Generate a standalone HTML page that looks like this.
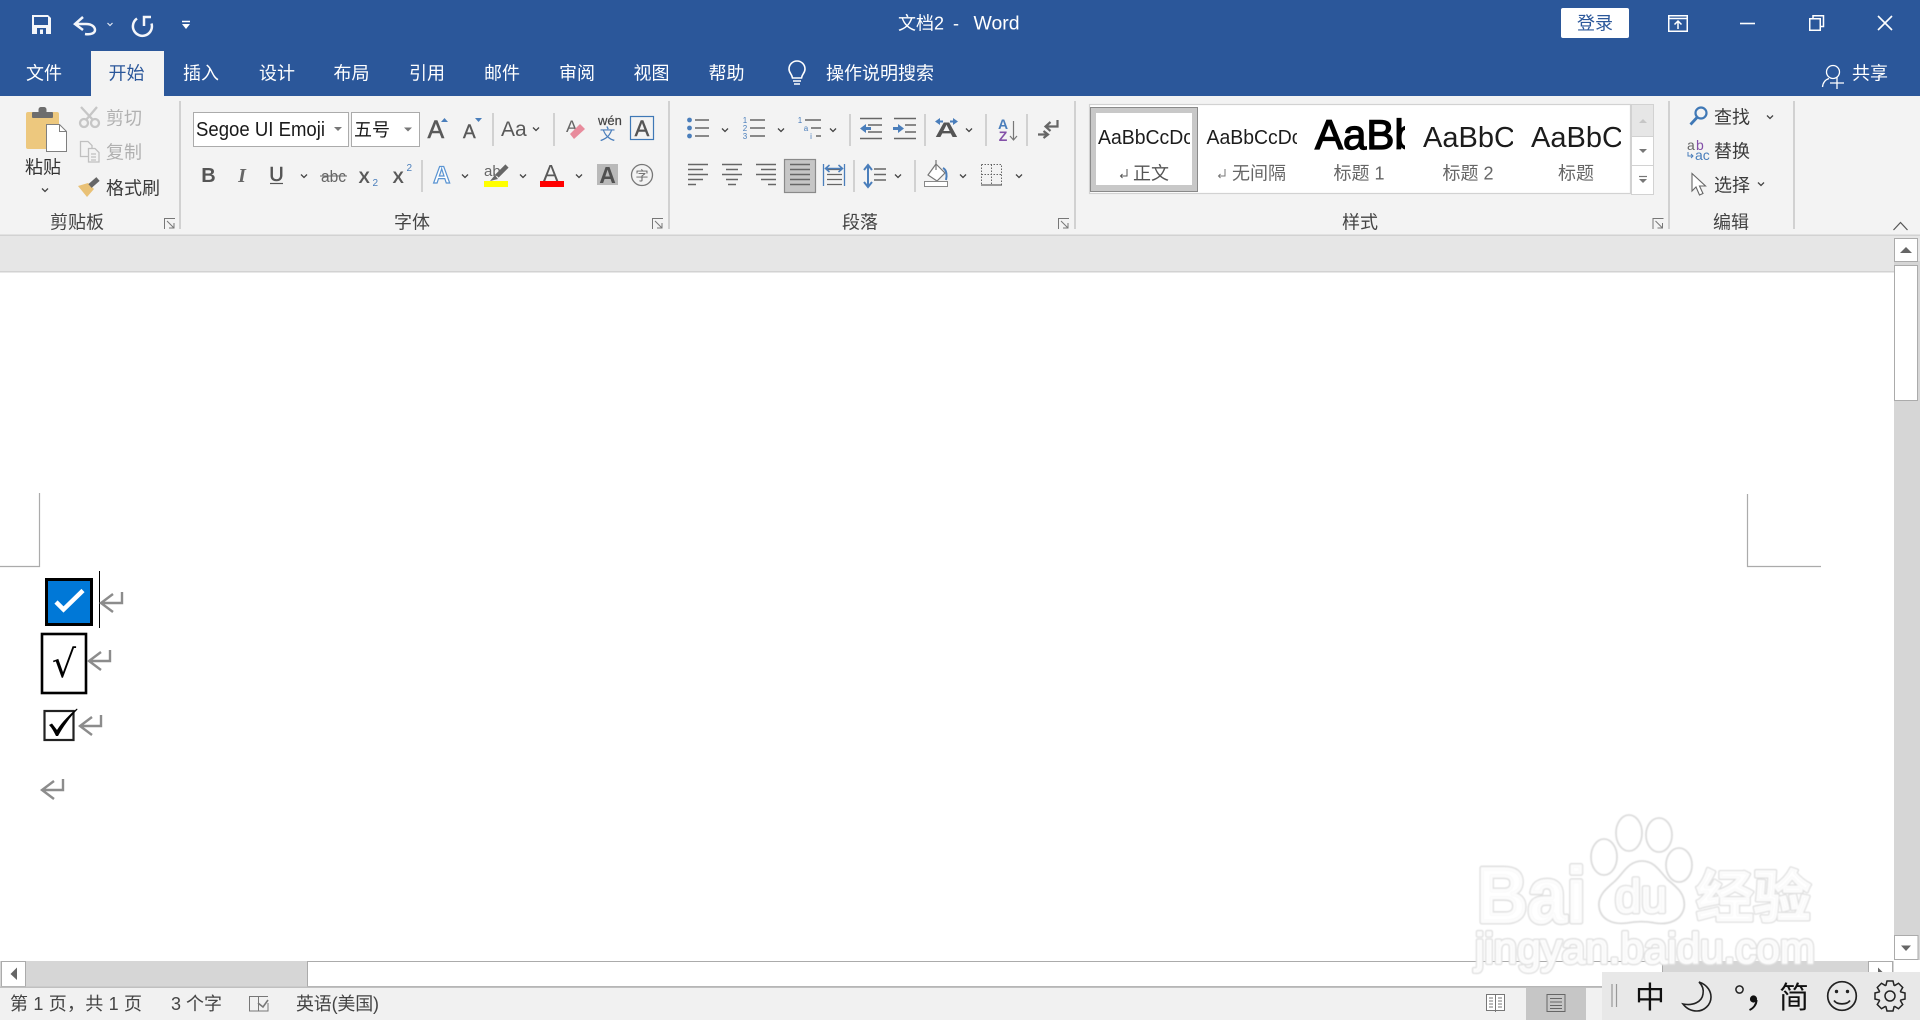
<!DOCTYPE html>
<html lang="zh"><head><meta charset="utf-8"><title>文档2 - Word</title>
<style>
html,body{margin:0;padding:0;width:1920px;height:1020px;overflow:hidden;background:#fff}
svg{display:block;font-family:"Liberation Sans","Noto Sans CJK SC",sans-serif}
.t{fill:#fff;font-size:18px;text-anchor:middle}
.g{fill:#444;font-size:18px;text-anchor:middle}
.l{fill:#666;font-size:18px;text-anchor:middle}
.d{fill:#b1b1b1;font-size:18px}
.k{fill:#3b3b3b;font-size:18px}
.a{fill:#595959;font-weight:700}
.sep{stroke:#c6c6c6;stroke-width:1.5}
.ln{stroke:#666;stroke-width:1.5;fill:none}
.bl{fill:#4a7ebb}
.pil{fill:none;stroke:#8c8c8c;stroke-width:2.4}
.wo{fill:none;stroke:#dedede;stroke-linejoin:round}
.wi{fill:#fff;fill-opacity:.8;stroke:#fff;stroke-opacity:.8;stroke-linejoin:round}
</style></head><body>
<svg xmlns="http://www.w3.org/2000/svg" width="1920" height="1020" viewBox="0 0 1920 1020">
<defs>
<path id="c" d="M-3 -1.5L0 1.5L3 -1.5" fill="none" stroke="#444" stroke-width="1.3"/>
<g id="lau" fill="none" stroke="#777" stroke-width="1"><path d="M.5 11V.5H11"/><path d="M3 3L10 10M10 5V10H5"/></g>
<g id="pi"><path class="pil" d="M122 592V603H101M113 594L101 603L113 612"/></g>
<clipPath id="s1"><rect x="1096" y="113" width="94" height="72"/></clipPath>
<clipPath id="s2"><rect x="1204" y="113" width="93" height="72"/></clipPath>
<clipPath id="s3"><rect x="1312" y="113" width="93" height="72"/></clipPath>
<clipPath id="s4"><rect x="1420" y="113" width="93" height="72"/></clipPath>
<clipPath id="s5"><rect x="1528" y="113" width="93" height="72"/></clipPath>
<filter id="soft"><feGaussianBlur stdDeviation=".6"/></filter>
</defs>

<!-- title bar -->
<rect width="1920" height="96" fill="#2b579a"/>
<path d="M32 15H48L51 18V34H32Z" fill="#f4f6fa"/>
<rect x="34" y="17" width="14" height="8" fill="#2b579a"/><rect x="37" y="28" width="9" height="6" fill="#2b579a"/><rect x="40" y="29.5" width="3" height="4.5" fill="#f4f6fa"/>
<path d="M83 17L75 24L83 30M76 24H86C92 24 95 27 95 30C95 33 91 35 85 34" fill="none" stroke="#f4f6fa" stroke-width="2.5"/>
<path d="M107.5 23L110 25.5L112.5 23" fill="none" stroke="#dfe6f2" stroke-width="1.2"/>
<path d="M151.5 23.5A9.5 9.5 0 1 1 137 18.5M151 17H144V26" fill="none" stroke="#f4f6fa" stroke-width="2.5"/>
<path d="M182 21.5H190" stroke="#fff" stroke-width="1.5"/><path d="M182 24H190L186 29Z" fill="#fff"/>
<text x="898" y="29.5" fill="#fff" font-size="18">文档2</text>
<text x="956" y="29.5" fill="#fff" font-size="18" text-anchor="middle">-</text>
<text x="973.5" y="29.5" fill="#fff" font-size="19" textLength="46" lengthAdjust="spacingAndGlyphs">Word</text>
<rect x="1561" y="8" width="68" height="30" rx="2" fill="#fff"/>
<text x="1595" y="29.5" fill="#2b579a" font-size="18" text-anchor="middle">登录</text>
<rect x="1668.75" y="15.75" width="18.5" height="15.5" fill="none" stroke="#fff" stroke-width="1.5"/><path d="M1668 18.5H1688" stroke="#fff" stroke-width="1.5"/>
<path d="M1678 29V21.5M1674.5 24.5L1678 21L1681.5 24.5" fill="none" stroke="#fff" stroke-width="1.5"/>
<path d="M1740 23.5H1755" stroke="#fff" stroke-width="1.6"/>
<rect x="1809.75" y="18.75" width="10.5" height="11.5" fill="none" stroke="#fff" stroke-width="1.5"/><path d="M1813 18.5V15.75H1823.5V26.5H1820.5" fill="none" stroke="#fff" stroke-width="1.5"/>
<path d="M1878 16L1892 30M1892 16L1878 30" stroke="#fff" stroke-width="1.6"/>

<!-- tabs -->
<rect x="91" y="51" width="73" height="45" fill="#f3f3f3"/>
<text class="t" x="44" y="79.5">文件</text>
<text class="t" x="126.5" y="79.5" style="fill:#2b579a">开始</text>
<text class="t" x="201" y="79.5">插入</text>
<text class="t" x="277" y="79.5">设计</text>
<text class="t" x="351.5" y="79.5">布局</text>
<text class="t" x="427" y="79.5">引用</text>
<text class="t" x="502" y="79.5">邮件</text>
<text class="t" x="577" y="79.5">审阅</text>
<text class="t" x="651.5" y="79.5">视图</text>
<text class="t" x="726.5" y="79.5">帮助</text>
<text class="t" x="880" y="79.5">操作说明搜索</text>
<text class="t" x="1870" y="79.5">共享</text>
<path d="M792.5 78C792 74 789 73 789 69A8 8 0 0 1 805 69C805 73 802 74 801.5 78ZM793 81H801M794 84H800" fill="none" stroke="#fff" stroke-width="1.6"/>
<circle cx="1833" cy="72" r="6.5" fill="none" stroke="#fff" stroke-width="1.3"/>
<path d="M1822.5 87C1823 82 1826 79.5 1829 78.5M1830 83H1844M1837 77V89" fill="none" stroke="#fff" stroke-width="1.3"/>

<!-- ribbon bg -->
<rect y="96" width="1920" height="139" fill="#f3f3f3"/>
<rect y="234.5" width="1920" height="1.5" fill="#d2d2d2"/>
<path class="sep" d="M180 101V229M669 101V229M1075 101V229M1669 101V229M1794 101V229"/>

<!-- clipboard -->
<rect x="26" y="112" width="33" height="37" rx="2" fill="#edc87e"/>
<rect x="32" y="112" width="21" height="6" rx="1" fill="#6d6d6d"/><rect x="38.5" y="107" width="8" height="7" rx="2.5" fill="#6d6d6d"/>
<path d="M46.5 124.5H59.5L66.5 131.5V151.5H46.5Z" fill="#fff" stroke="#7f7f7f"/><path d="M59.5 124.5V131.5H66.5" fill="none" stroke="#7f7f7f"/>
<text class="g" x="43" y="173.5" style="fill:#333">粘贴</text>
<use href="#c" x="45" y="190"/>
<g fill="none" stroke="#c6c6c6" stroke-width="2.3"><circle cx="84" cy="123" r="4"/><circle cx="95" cy="123" r="4"/><path d="M81 107L93 120M97 107L86 120"/></g>
<text class="d" x="106" y="124.5">剪切</text>
<g fill="#f3f3f3" stroke="#c0c0c0" stroke-width="1.3"><path d="M80.5 141.5H88L92 145.5V156.5H80.5Z"/><path d="M88.5 148.5H95L99 152.5V162H88.5Z"/><path d="M91 154H96M91 157H96M91 160H96" /></g>
<text class="d" x="106" y="158.5">复制</text>
<path d="M78 186L88 183L94 189L87 197Z" fill="#e9c176"/><path d="M90 186L98 179" stroke="#666" stroke-width="5"/>
<text class="k" x="106" y="194.5">格式刷</text>
<text class="g" x="77" y="228.5">剪贴板</text>
<use href="#lau" x="164" y="218"/>

<!-- font -->
<rect x="193.5" y="112.5" width="155" height="34" fill="#fff" stroke="#ababab"/>
<text x="196" y="136" font-size="20" fill="#1a1a1a" textLength="129" lengthAdjust="spacingAndGlyphs">Segoe UI Emoji</text>
<path d="M334 127H342L338 131Z" fill="#777"/>
<rect x="351.5" y="112.5" width="68" height="34" fill="#fff" stroke="#ababab"/>
<text x="354" y="136" font-size="18" fill="#1a1a1a">五号</text>
<path d="M404 127.5H412L408 131.5Z" fill="#777"/>
<text x="427.5" y="138" font-size="25" fill="#595959" stroke="#595959" stroke-width=".5">A</text><path class="bl" d="M441 122L444.5 118L448 122Z"/>
<text x="463" y="138" font-size="19" fill="#595959" stroke="#595959" stroke-width=".4">A</text><path class="bl" d="M475 118H482L478.5 122Z"/>
<path class="sep" d="M493 113V146M554 113V146"/>
<text x="501" y="136" fill="#595959" font-size="21">Aa</text><use href="#c" x="536" y="129"/>
<text x="566" y="132" fill="#666" font-size="17">A</text>
<path d="M580 124L585 129L574 139L570 134Z" fill="#e88b9c"/>
<text x="598" y="125" font-size="13" fill="#444" stroke="#444" stroke-width=".2">wén</text>
<text x="607.5" y="139.5" font-size="15.5" fill="#4a7ebb" text-anchor="middle">文</text>
<rect x="630.5" y="116.5" width="23" height="23" fill="none" stroke="#3f78b6" stroke-width="1.2"/>
<text x="642" y="136" font-size="22" fill="#555" stroke="#555" stroke-width=".4" text-anchor="middle">A</text>

<text x="208.5" y="182" font-size="20" fill="#555" font-weight="700" text-anchor="middle">B</text>
<text x="242" y="182" font-size="20" fill="#666" font-style="italic" font-weight="700" text-anchor="middle" font-family="Liberation Serif">I</text>
<text x="276.5" y="181" font-size="20" fill="#555" text-anchor="middle" stroke="#555" stroke-width=".5">U</text><path d="M270 183.5H283" stroke="#555" stroke-width="1.2"/>
<use href="#c" x="304" y="176"/>
<text x="321" y="182" font-size="17" fill="#666" textLength="25" lengthAdjust="spacingAndGlyphs">abc</text><path d="M320 176H347" stroke="#666" stroke-width="1"/>
<text class="a" x="358.5" y="183" font-size="17">X</text><text x="372.5" y="186" font-size="10" fill="#4a7ebb">2</text>
<text class="a" x="392.5" y="183" font-size="17">X</text><text x="406.5" y="171" font-size="10" fill="#4a7ebb">2</text>
<path class="sep" d="M422 160V192M854 160V192M915 160V192"/>
<text x="433" y="183" font-size="24" fill="#fff" stroke="#5a94d2" stroke-width="1.2" font-weight="700">A</text>
<use href="#c" x="465" y="176"/>
<text x="484" y="176" font-size="15" fill="#666">ab</text>
<path d="M507 166L497 176" stroke="#666" stroke-width="4.5"/><path d="M495 175L490 181L498 179Z" fill="#666"/>
<rect x="484" y="181" width="24" height="6" fill="#ff0"/>
<use href="#c" x="523" y="176"/>
<text x="543" y="181" font-size="23" fill="#595959">A</text>
<rect x="540" y="181" width="24" height="6" fill="#f00"/>
<use href="#c" x="579" y="176"/>
<rect x="597" y="164" width="21" height="21" fill="#b9b9b9"/>
<text x="607.5" y="183" font-size="23" fill="#505050" font-weight="700" text-anchor="middle">A</text>
<circle cx="642" cy="175" r="10.5" fill="none" stroke="#777" stroke-width="1.3"/>
<text x="642" y="180.5" font-size="13" fill="#666" text-anchor="middle">字</text>
<text class="g" x="412" y="228.5">字体</text>
<use href="#lau" x="652" y="218"/>

<!-- paragraph row 1 -->
<g class="bl"><circle cx="689.5" cy="120" r="2.4"/><circle cx="689.5" cy="128" r="2.4"/><circle cx="689.5" cy="136" r="2.4"/></g>
<path class="ln" d="M695 120H709M695 128H709M695 136H709M750 120H765M750 128H765M750 136H765M805 120H821M811 128H821M816 136H821"/>
<use href="#c" x="725" y="130"/><use href="#c" x="781" y="130"/><use href="#c" x="833" y="130"/>
<g font-size="8" fill="#4a7ebb" text-anchor="middle"><text x="745" y="123">1</text><text x="745" y="131">2</text><text x="745" y="139">3</text><text x="800" y="123">1</text><text x="806" y="131">a</text><text x="811" y="139">i</text></g>
<path class="sep" d="M850 114V146M925 114V146M986 114V146M1027 114V146"/>
<path class="ln" d="M860 118.5H882M868 125H882M868 132H882M860 138.5H882M894 118.5H916M905 125H916M905 132H916M894 138.5H916"/>
<path class="bl" d="M860 128.5L866 124V127H871V130H866V133Z"/><path class="bl" d="M904 128.5L898 124V127H893V130H898V133Z"/>
<text x="946.5" y="137" font-size="21" fill="#555" font-weight="700" text-anchor="middle" textLength="23" lengthAdjust="spacingAndGlyphs">A</text>
<path d="M935 121.5L940 118V120.5H943V122.5H940V125ZM958 121.5L953 118V120.5H950V122.5H953V125Z" class="bl"/>
<use href="#c" x="969" y="130"/>
<text x="1003" y="129" font-size="14" fill="#4a7ebb" font-weight="700" text-anchor="middle">A</text>
<text x="1003" y="141" font-size="14" fill="#8350a8" font-weight="700" text-anchor="middle">Z</text>
<path d="M1013.5 121V140M1010 136L1013.5 140L1017 136" fill="none" stroke="#777" stroke-width="1.2"/>
<path d="M1057.5 120V126.5H1046M1050.5 122L1045.5 126.5L1050.5 131" fill="none" stroke="#666" stroke-width="2.2"/>
<path d="M1038 134.5H1047.5M1043.5 131L1048 134.5L1043.5 138" fill="none" stroke="#666" stroke-width="2.2"/>

<!-- paragraph row 2 -->
<rect x="784.5" y="159.5" width="31" height="33" fill="#c6c6c6" stroke="#8a8a8a" stroke-width="1.2"/>
<path class="ln" d="M688 164.5H708M688 169.5H703M688 174.5H708M688 179.5H703M688 184.5H696"/>
<path class="ln" d="M722 164.5H742M726 169.5H738M722 174.5H742M726 179.5H738M728 184.5H736"/>
<path class="ln" d="M756 164.5H776M761 169.5H776M756 174.5H776M761 179.5H776M768 184.5H776"/>
<path class="ln" d="M790 164.5H810M790 169.5H810M790 174.5H810M790 179.5H810M790 184.5H810"/>
<path class="ln" d="M827 169.5H842M827 174.5H842M827 179.5H842M827 184.5H842" style="stroke-width:1.2"/>
<path d="M823.5 164V186M844.5 164V186" stroke="#4a7ebb" stroke-width="1.3"/>
<path d="M826 168.5H842M829.5 165L825.5 168.5L829.5 172M838.5 165L842.5 168.5L838.5 172" fill="none" stroke="#4a7ebb" stroke-width="1.5"/>
<path d="M868 166V186M864 170L868 165L872 170M864 182L868 187L872 182" fill="none" stroke="#4a7ebb" stroke-width="2"/>
<path class="ln" d="M874 169H886M874 174.5H886M874 180H886"/>
<use href="#c" x="898" y="176"/>
<path d="M936 164L928 175L937 181L945 173Z" fill="#fff" stroke="#777" stroke-width="1.2"/>
<path d="M936 160V170" stroke="#777" stroke-width="1.2"/><path d="M943 168C947 170 947 176 946 180" fill="none" stroke="#4a7ebb" stroke-width="2"/>
<rect x="924.5" y="181.5" width="23" height="5" fill="#fff" stroke="#888"/>
<use href="#c" x="963" y="176"/>
<path d="M981.5 164.5H1001.5V184.5M981.5 164.5V184.5M991.5 164.5V184.5M981.5 174.5H1001.5" fill="none" stroke="#666" stroke-dasharray="1.5 1.5"/>
<path d="M981 185H1002" stroke="#666" stroke-width="1.2"/>
<use href="#c" x="1019" y="176"/>
<text class="g" x="860" y="228.5">段落</text>
<use href="#lau" x="1058" y="218"/>

<!-- styles -->
<rect x="1089.5" y="104.5" width="541" height="89" fill="#fff" stroke="#d2d2d2" stroke-width="1.2"/>
<rect x="1090.5" y="107.5" width="107" height="84" fill="#c8c8c8" stroke="#8a8a8a"/>
<rect x="1096" y="113" width="96" height="72" fill="#fff"/>
<g font-size="20.5" fill="#1c1c1c">
<text x="1098" y="144" clip-path="url(#s1)" textLength="95" lengthAdjust="spacingAndGlyphs">AaBbCcDc</text>
<text x="1206.5" y="144" clip-path="url(#s2)" textLength="95" lengthAdjust="spacingAndGlyphs">AaBbCcDc</text>
<text x="1315" y="149" clip-path="url(#s3)" font-size="42" fill="#000" stroke="#000" stroke-width="1.3">AaBb</text>
<text x="1423" y="147" clip-path="url(#s4)" font-size="29">AaBbC</text>
<text x="1531" y="147" clip-path="url(#s5)" font-size="29">AaBbC</text>
</g>
<path d="M1127 169V176H1120.5M1122.5 174L1120.5 176L1122.5 178" fill="none" stroke="#555" stroke-width="1"/>
<text class="l" x="1151" y="179.5" style="fill:#555">正文</text>
<path d="M1225 169V176H1218.5M1220.5 174L1218.5 176L1220.5 178" fill="none" stroke="#777" stroke-width="1"/>
<text class="l" x="1259" y="179.5">无间隔</text>
<text class="l" x="1359" y="179.5">标题 1</text>
<text class="l" x="1468" y="179.5">标题 2</text>
<text class="l" x="1576" y="179.5">标题</text>
<rect x="1631.5" y="104.5" width="22" height="32" fill="#e6e6e6" stroke="#d2d2d2"/>
<rect x="1631.5" y="136.5" width="22" height="29" fill="#fff" stroke="#d2d2d2"/>
<rect x="1631.5" y="165.5" width="22" height="29" fill="#fff" stroke="#d2d2d2"/>
<path d="M1639 123L1643 119L1647 123Z" fill="#c6c6c6"/>
<path d="M1639 149H1647L1643 153Z" fill="#777"/>
<path d="M1639 176.5H1647" stroke="#777" stroke-width="1.2"/><path d="M1639 179H1647L1643 183Z" fill="#777"/>
<text class="g" x="1360" y="228.5">样式</text>
<use href="#lau" x="1652.5" y="218"/>

<!-- editing -->
<circle cx="1701" cy="113" r="5.5" fill="none" stroke="#3f78b6" stroke-width="2.2"/><path d="M1697 117.5L1690.5 124.5" stroke="#3f78b6" stroke-width="2.8"/>
<text class="k" x="1714" y="123.5">查找</text><use href="#c" x="1770" y="117"/>
<text x="1687" y="150" font-size="14" fill="#666">a</text><text x="1696" y="150" font-size="14" fill="#8350a8">b</text>
<text x="1695" y="160" font-size="14" fill="#4a7ebb">ac</text>
<path d="M1688 152V156H1693M1691 154L1693 156L1691 158" fill="none" stroke="#4a7ebb" stroke-width="1"/>
<text class="k" x="1714" y="157.5">替换</text>
<path d="M1692 173.5V191L1696 187L1699.5 195L1703 193.5L1699.5 186H1705.5Z" fill="#fff" stroke="#666" stroke-width="1.1"/>
<text class="k" x="1714" y="191.5">选择</text><use href="#c" x="1761" y="184"/>
<text class="g" x="1731" y="228.5">编辑</text>
<path d="M1893.5 230L1900.5 222.5L1907.5 230" fill="none" stroke="#555" stroke-width="1.2"/>

<!-- band -->
<rect y="236" width="1920" height="35" fill="#e6e6e6"/>
<rect y="271" width="1894" height="1.5" fill="#d2d2d2"/>

<!-- doc marks -->
<path d="M39.5 493V566.5H0M1747.5 494V566.5H1821" fill="none" stroke="#ababab" stroke-width="1.2"/>

<!-- checkboxes -->
<rect x="46.5" y="579.5" width="45" height="45" fill="#0078d7" stroke="#000" stroke-width="3"/>
<path d="M56 602L63.5 609.5L83 590.5" fill="none" stroke="#fff" stroke-width="4.5"/>
<path d="M99.5 571V628" stroke="#000"/>
<use href="#pi"/>
<rect x="42" y="634" width="44" height="59" fill="#fff" stroke="#000" stroke-width="2.6"/>
<text x="64" y="677" font-size="38" fill="#000" text-anchor="middle" font-family="DejaVu Sans">√</text>
<use href="#pi" x="-12" y="58"/>
<rect x="44.5" y="711" width="29" height="29" fill="#fff" stroke="#222" stroke-width="2.2"/>
<path d="M49 725L52 723.5L57 730C62 722 70 714 77 708.5L77.5 709.5C70 717 63 727 58 736L56 736C54 732 52 728 49 725Z" fill="#000"/>
<use href="#pi" x="-21" y="123"/>
<use href="#pi" x="-59" y="187"/>

<!-- vertical scrollbar -->
<rect x="1894" y="261" width="26" height="699" fill="#d6d6d6"/>
<rect x="1894.5" y="238.5" width="23" height="23" fill="#fff" stroke="#ababab"/>
<path d="M1900 253L1906 247L1912 253Z" fill="#666"/>
<rect x="1894.5" y="265.5" width="23" height="135" fill="#fff" stroke="#ababab"/>
<rect x="1894.5" y="935.5" width="23.5" height="24" fill="#fff" stroke="#ababab"/>
<path d="M1901 945.5H1911L1906 951Z" fill="#666"/>

<!-- horizontal scrollbar -->
<rect x="0" y="961" width="1894" height="26" fill="#d6d6d6"/>
<rect x="1.5" y="961.5" width="24" height="25" fill="#fff" stroke="#ababab"/>
<path d="M17 967.5V980L10.5 974Z" fill="#666"/>
<rect x="307.5" y="961.5" width="1355" height="25" fill="#fff" stroke="#ababab"/>
<rect x="1868.5" y="961.5" width="24" height="25" fill="#fff" stroke="#ababab"/>
<path d="M1878 967.5V980L1884.5 974Z" fill="#666"/>

<!-- status bar -->
<rect y="986.5" width="1920" height="1.5" fill="#c0c0c0"/>
<rect y="988" width="1920" height="32" fill="#f1f1f1"/>
<g font-size="18" fill="#444">
<text x="10" y="1010" xml:space="preserve" textLength="132">第 1 页，共 1 页</text>
<text x="171" y="1010" textLength="51">3 个字</text>
<text x="296" y="1010" textLength="83">英语(美国)</text>
</g>
<path d="M249.5 996.5H258.5V1011H249.5ZM258.5 996.5H268M258.5 1011H268V1003" fill="none" stroke="#777"/>
<path d="M258 1003L263 1007L268 1000" fill="none" stroke="#777" stroke-width="1.6"/>
<rect x="1486.5" y="994.5" width="18" height="16" fill="#fff" stroke="#777"/>
<path d="M1495.5 994.5V1012M1489 998H1493M1489 1001H1493M1489 1004H1493M1489 1007H1493M1498 998H1502M1498 1001H1502M1498 1004H1502M1498 1007H1502" stroke="#777" fill="none"/>
<rect x="1526" y="988" width="60" height="32" fill="#c6c6c6"/>
<rect x="1547" y="994.5" width="18" height="17" fill="none" stroke="#666"/>
<path d="M1550 998.5H1562M1550 1002H1562M1550 1005.5H1562M1550 1008.5H1562" stroke="#666"/>

<!-- watermark -->
<g filter="url(#soft)">
<g fill="#fff" fill-opacity=".8" stroke="#dcdcdc" stroke-width="1.8">
<ellipse cx="1629" cy="833" rx="13" ry="18"/><ellipse cx="1659" cy="835" rx="13" ry="17"/><ellipse cx="1604" cy="857" rx="13" ry="18"/><ellipse cx="1679" cy="865" rx="13" ry="17"/>
<path d="M1642 861C1655 861 1660 872 1668 880C1678 888 1686 895 1684 908C1681 921 1668 925 1655 923C1645 921 1637 921 1627 923C1612 925 1600 919 1599 906C1598 895 1607 888 1614 882C1623 874 1628 861 1642 861Z"/>
</g>
<g font-weight="700">
<text class="wo" x="1477" y="922" font-size="78" textLength="109" lengthAdjust="spacingAndGlyphs" stroke-width="5">Bai</text>
<text class="wi" x="1477" y="922" font-size="78" textLength="109" lengthAdjust="spacingAndGlyphs" stroke-width="2.4">Bai</text>
<text class="wo" x="1615" y="912" font-size="46" textLength="52" lengthAdjust="spacingAndGlyphs" stroke-width="4.5" font-weight="400">du</text>
<text class="wi" x="1615" y="912" font-size="46" textLength="52" lengthAdjust="spacingAndGlyphs" stroke-width="2.2" font-weight="400">du</text>
<text class="wo" x="1696" y="917" font-size="56" textLength="115" lengthAdjust="spacingAndGlyphs" stroke-width="4">经验</text>
<text class="wi" x="1696" y="917" font-size="56" textLength="115" lengthAdjust="spacingAndGlyphs" stroke-width="1.8">经验</text>
</g>
<text class="wo" x="1475" y="963" font-size="43" textLength="340" lengthAdjust="spacingAndGlyphs" stroke-width="4.2">jingyan.baidu.com</text>
<text class="wi" x="1475" y="963" font-size="43" textLength="340" lengthAdjust="spacingAndGlyphs" stroke-width="1.8">jingyan.baidu.com</text>
</g>

<!-- IME -->
<rect x="1602" y="972" width="318" height="48" fill="#e8e8e8"/>
<path d="M1612 984V1007M1616.5 984V1007" stroke="#999" stroke-width="1.2"/>
<text x="1650" y="1008" font-size="30" fill="#111" text-anchor="middle">中</text>
<path d="M1699 982C1708 985 1711 992 1711 997C1711 1005 1704 1011 1697 1011C1691 1011 1686 1008 1683 1004C1693 1006 1702 1002 1703 994C1704 989 1702 985 1699 982Z" fill="none" stroke="#222" stroke-width="1.6"/>
<circle cx="1739.5" cy="989.5" r="3.6" fill="none" stroke="#222" stroke-width="1.5"/>
<circle cx="1753.5" cy="999" r="3.6" fill="#111"/><path d="M1756.5 1000C1756.5 1004 1754 1008 1749.5 1010" fill="none" stroke="#111" stroke-width="2"/>
<text x="1794" y="1008" font-size="30" fill="#111" text-anchor="middle">简</text>
<circle cx="1842" cy="996" r="14.3" fill="none" stroke="#222" stroke-width="1.7"/>
<circle cx="1836.5" cy="991.5" r="1.7" fill="#222"/><circle cx="1847.5" cy="991.5" r="1.7" fill="#222"/>
<path d="M1834 1000.5C1837 1005 1847 1005 1850 1000.5" fill="none" stroke="#222" stroke-width="1.7"/>
<g fill="none" stroke="#222" stroke-width="1.5">
<circle cx="1890" cy="996" r="5"/>
<path transform="rotate(0 1890 996)" d="M1885.8 985.8L1887 981H1893L1894.2 985.8"/>
<path transform="rotate(45 1890 996)" d="M1885.8 985.8L1887 981H1893L1894.2 985.8"/>
<path transform="rotate(90 1890 996)" d="M1885.8 985.8L1887 981H1893L1894.2 985.8"/>
<path transform="rotate(135 1890 996)" d="M1885.8 985.8L1887 981H1893L1894.2 985.8"/>
<path transform="rotate(180 1890 996)" d="M1885.8 985.8L1887 981H1893L1894.2 985.8"/>
<path transform="rotate(225 1890 996)" d="M1885.8 985.8L1887 981H1893L1894.2 985.8"/>
<path transform="rotate(270 1890 996)" d="M1885.8 985.8L1887 981H1893L1894.2 985.8"/>
<path transform="rotate(315 1890 996)" d="M1885.8 985.8L1887 981H1893L1894.2 985.8"/>
</g>
</svg>
</body></html>
